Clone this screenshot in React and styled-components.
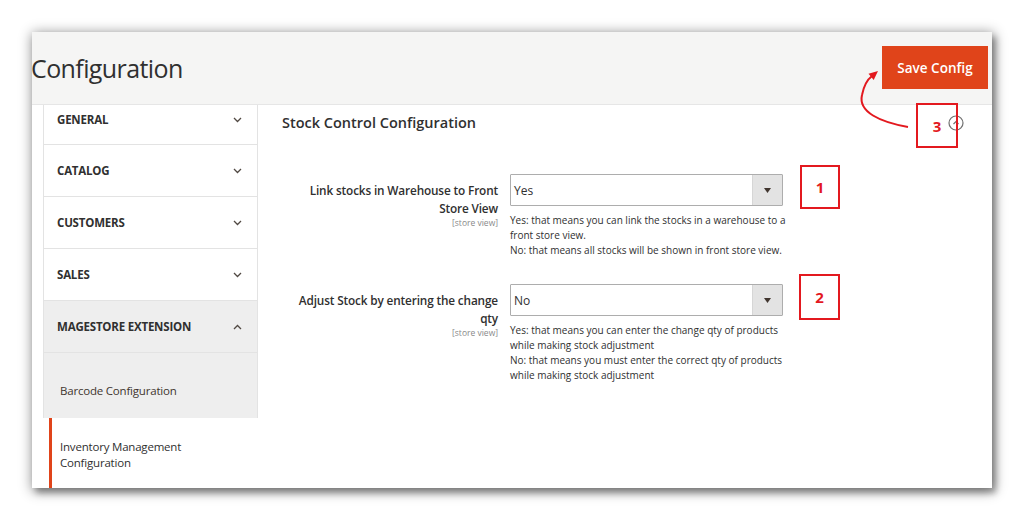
import React from 'react';
import styled, { createGlobalStyle } from 'styled-components';

const GlobalStyle = createGlobalStyle`
  html, body { margin: 0; padding: 0; background: #fff; }
  body { font-family: 'Open Sans', 'Liberation Sans', sans-serif; color: #303030; }
  * { box-sizing: border-box; }
`;

const Page = styled.div`
  width: 1024px;
  height: 520px;
  padding: 32px 0 0 32px;
  background: #fff;
  overflow: hidden;
`;

const Frame = styled.div`
  position: relative;
  width: 960px;
  height: 456px;
  background: #fff;
  overflow: hidden;
  display: flex;
  flex-direction: column;
  box-shadow: 1px 2px 12px 1px rgba(0, 0, 0, 0.45), 4px 5px 6px rgba(0, 0, 0, 0.28);
`;

const Header = styled.header`
  height: 73px;
  flex-shrink: 0;
  background: #f5f5f4;
  border-bottom: 1px solid #e6e6e6;
  display: flex;
  justify-content: space-between;
  align-items: flex-start;
`;

const Title = styled.h1`
  margin: 18px 0 0 -1px;
  font-size: 25px;
  font-weight: 400;
  line-height: 36px;
  letter-spacing: -0.6px;
  color: #303030;
`;

const SaveButton = styled.button`
  margin: 14px 4px 0 0;
  width: 106px;
  height: 43px;
  border: none;
  background: #e0441a;
  color: #fff;
  font-family: inherit;
  font-size: 13.5px;
  font-weight: 600;
  cursor: pointer;
`;

const Body = styled.div`
  flex: 1;
  display: flex;
  min-height: 0;
`;

const Sidebar = styled.nav`
  margin-left: 11px;
  width: 215px;
  flex-shrink: 0;
  display: flex;
  flex-direction: column;
`;

const NavGroup = styled.div`
  border-left: 1px solid #e3e3e3;
  border-right: 1px solid #e3e3e3;
`;

const NavTitle = styled.div`
  height: ${(p) => (p.$short ? '40px' : '52px')};
  display: flex;
  align-items: ${(p) => (p.$short ? 'flex-start' : 'center')};
  justify-content: space-between;
  padding: ${(p) => (p.$short ? '7px 15px 0 13px' : '1px 15px 0 13px')};
  border-bottom: 1px solid #e3e3e3;
  background: ${(p) => (p.$open ? '#eeeeee' : '#fff')};
  font-size: 11.5px;
  font-weight: 700;
  line-height: 16px;
  letter-spacing: -0.2px;
  text-transform: uppercase;
  color: #303030;
`;

const Chevron = styled.svg`
  width: 9px;
  height: 6px;
  margin-top: ${(p) => (p.$short ? '5px' : '0')};
  flex-shrink: 0;
`;

const SubItem = styled.div`
  height: 65px;
  padding: 30px 0 0 16px;
  background: #eeeeee;
  font-size: 11.5px;
  line-height: 16px;
  letter-spacing: -0.2px;
  color: #41362f;
`;

const ActiveItem = styled.div`
  flex: 1;
  margin-left: 6px;
  border-left: 3px solid #e0441a;
  padding: 21px 0 0 8px;
  font-size: 11.5px;
  line-height: 16px;
  letter-spacing: -0.2px;
  color: #303030;
`;

const Main = styled.main`
  flex: 1;
  padding: 8px 30px 0 24px;
`;

const SectionHead = styled.div`
  display: flex;
  justify-content: space-between;
  align-items: center;
  height: 20px;
`;

const SectionTitle = styled.h2`
  margin: 0;
  font-size: 14.5px;
  font-weight: 600;
  line-height: 20px;
  color: #303030;
`;

const Field = styled.div`
  display: grid;
  grid-template-columns: 216px 273px;
  column-gap: 12px;
  margin-top: ${(p) => p.$top}px;
`;

const Label = styled.div`
  padding-top: 7px;
  text-align: right;
  font-size: 11.8px;
  font-weight: 600;
  line-height: 18px;
  letter-spacing: -0.15px;
  color: #303030;
`;

const Scope = styled.span`
  display: block;
  font-size: 8.5px;
  font-weight: 400;
  line-height: 12px;
  letter-spacing: 0;
  color: #8a8a8a;
`;

const Select = styled.div`
  height: 32px;
  border: 1px solid #adadad;
  border-radius: 1px;
  display: flex;
  background: #fff;
`;

const SelectValue = styled.div`
  flex: 1;
  padding-left: 3px;
  display: flex;
  align-items: center;
  font-size: 12px;
  color: #303030;
`;

const SelectArrow = styled.div`
  width: 30px;
  background: #e3e3e3;
  border-left: 1px solid #d6d6d6;
  display: flex;
  align-items: center;
  justify-content: center;
`;

const Note = styled.div`
  margin-top: 7px;
  font-size: 10px;
  line-height: 15px;
  color: #303030;
`;

const NoteLine = styled.span`
  display: block;
  white-space: nowrap;
`;

const Marker = styled.div`
  position: absolute;
  left: ${(p) => p.$x}px;
  top: ${(p) => p.$y}px;
  width: ${(p) => p.$w}px;
  height: ${(p) => p.$h}px;
  border: 2px solid #e3191f;
  display: flex;
  align-items: center;
  justify-content: center;
  font-size: 15px;
  font-weight: 700;
  color: #e3191f;
`;

const ArrowLayer = styled.svg`
  position: absolute;
  left: 0;
  top: 0;
  width: 960px;
  height: 456px;
  pointer-events: none;
`;

const ChevronIcon = ({ up, short }) => (
  <Chevron viewBox="0 0 9 6" $short={short}>
    <polyline
      points={up ? '1,5 4.5,1.5 8,5' : '1,1 4.5,4.5 8,1'}
      fill="none"
      stroke="#514943"
      strokeWidth="1.3"
    />
  </Chevron>
);

const CollapseIcon = () => (
  <svg width="16" height="16" viewBox="0 0 16 16" style={{ marginRight: '-2px' }}>
    <circle cx="8" cy="8" r="7" fill="none" stroke="#6f6f6f" strokeWidth="1.2" />
    <polyline points="5.5,9 8,6.5 10.5,9" fill="none" stroke="#6f6f6f" strokeWidth="1.2" />
  </svg>
);

const DropTriangle = () => (
  <svg width="7" height="5" viewBox="0 0 7 5">
    <polygon points="0,0 7,0 3.5,5" fill="#41362f" />
  </svg>
);

const navItems = [
  { label: 'General', short: true },
  { label: 'Catalog' },
  { label: 'Customers' },
  { label: 'Sales' },
];

const fields = [
  {
    top: 41,
    label: ['Link stocks in Warehouse to Front', 'Store View'],
    value: 'Yes',
    notes: [
      'Yes: that means you can link the stocks in a warehouse to a',
      'front store view.',
      'No: that means all stocks will be shown in front store view.',
    ],
  },
  {
    top: 26,
    label: ['Adjust Stock by entering the change', 'qty'],
    value: 'No',
    notes: [
      'Yes: that means you can enter the change qty of products',
      'while making stock adjustment',
      'No: that means you must enter the correct qty of products',
      'while making stock adjustment',
    ],
  },
];

export default function App() {
  return (
    <>
      <GlobalStyle />
      <Page>
        <Frame>
          <Header>
            <Title>Configuration</Title>
            <SaveButton>Save Config</SaveButton>
          </Header>
          <Body>
            <Sidebar>
              <NavGroup>
                {navItems.map((item) => (
                  <NavTitle key={item.label} $short={item.short}>
                    {item.label}
                    <ChevronIcon short={item.short} />
                  </NavTitle>
                ))}
                <NavTitle $open>
                  Magestore Extension
                  <ChevronIcon up />
                </NavTitle>
                <SubItem>Barcode Configuration</SubItem>
              </NavGroup>
              <ActiveItem>
                Inventory Management
                <br />
                Configuration
              </ActiveItem>
            </Sidebar>
            <Main>
              <SectionHead>
                <SectionTitle>Stock Control Configuration</SectionTitle>
                <CollapseIcon />
              </SectionHead>
              {fields.map((f) => (
                <Field key={f.value} $top={f.top}>
                  <Label>
                    {f.label[0]}
                    <br />
                    {f.label[1]}
                    <Scope>[store view]</Scope>
                  </Label>
                  <div>
                    <Select>
                      <SelectValue>{f.value}</SelectValue>
                      <SelectArrow>
                        <DropTriangle />
                      </SelectArrow>
                    </Select>
                    <Note>
                      {f.notes.map((n) => (
                        <NoteLine key={n}>{n}</NoteLine>
                      ))}
                    </Note>
                  </div>
                </Field>
              ))}
            </Main>
          </Body>
          <Marker $x={768} $y={133} $w={40} $h={44}>1</Marker>
          <Marker $x={767} $y={242} $w={41} $h={46}>2</Marker>
          <Marker $x={884} $y={71} $w={42} $h={45}>3</Marker>
          <ArrowLayer viewBox="0 0 960 456">
            <path
              d="M 876 95 C 848 90, 826 80, 830 63 C 832 53, 836 47, 840 44"
              fill="none"
              stroke="#e3191f"
              strokeWidth="2"
            />
            <polygon points="846,39 841.7,47.9 836.5,41.7" fill="#e3191f" />
          </ArrowLayer>
        </Frame>
      </Page>
    </>
  );
}
